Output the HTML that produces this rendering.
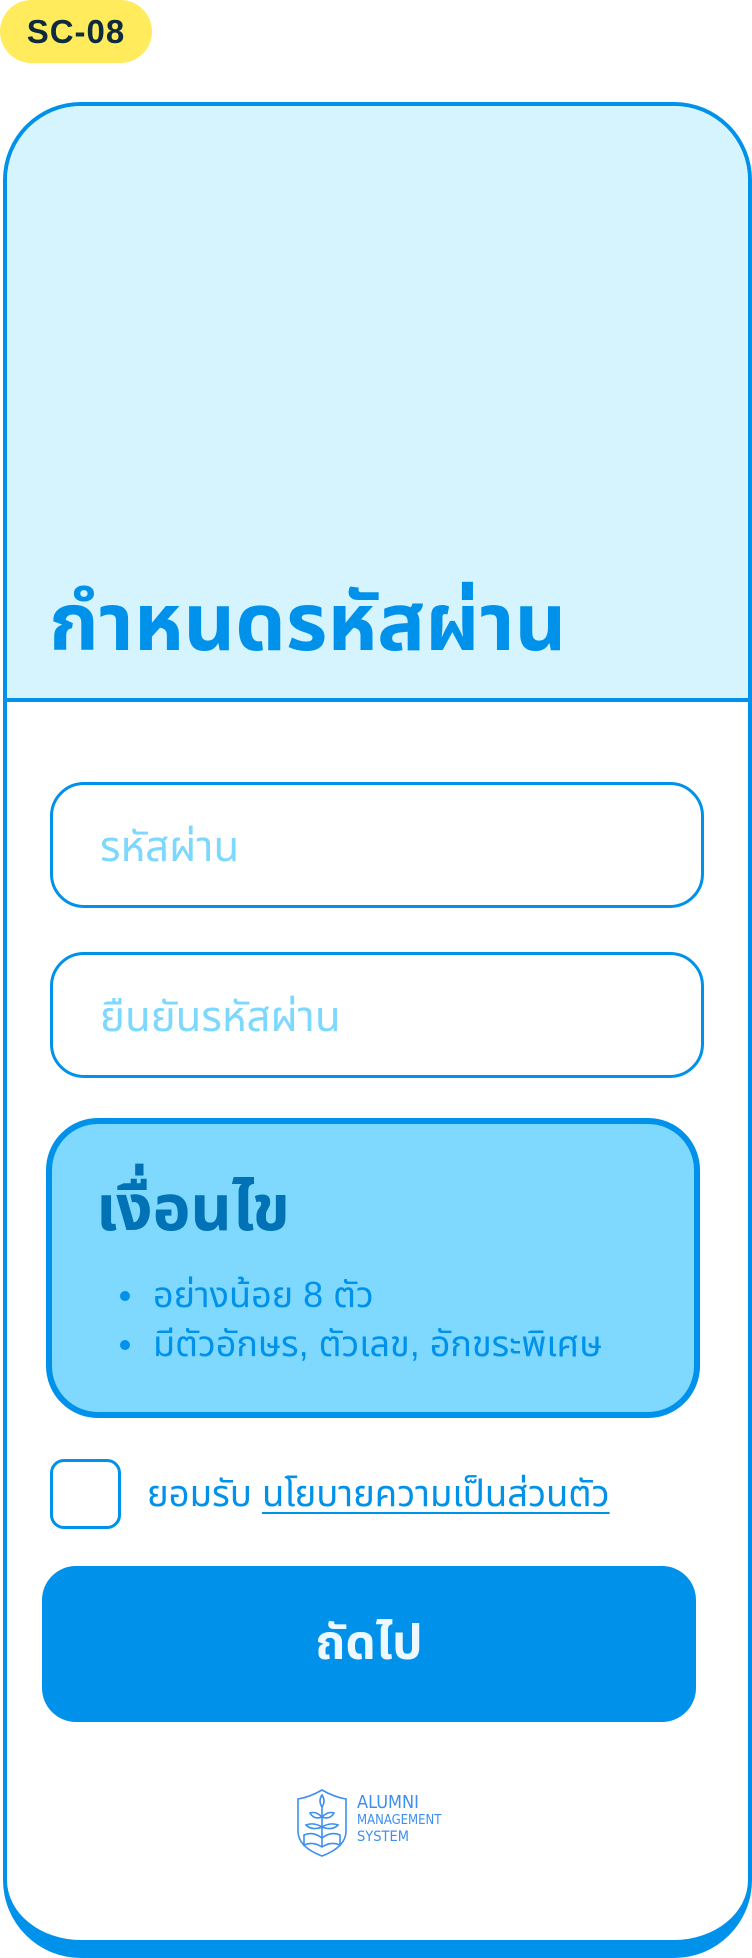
<!DOCTYPE html>
<html><head><meta charset="utf-8"><style>
*{margin:0;padding:0;box-sizing:border-box}
body{width:752px;height:1958px;background:#fff;position:relative;overflow:hidden;font-family:"Liberation Sans","Noto Sans Thai","Noto Sans CJK SC",sans-serif}
.abs{position:absolute}
.badge{left:0;top:0;width:152px;height:63px;background:#ffeb5b;border-radius:32px;color:#0d2a3f;font-weight:bold;font-size:33px;line-height:63px;text-align:center;letter-spacing:1px}
.card{left:3px;top:102px;width:749px;height:1856px;border:4px solid #0092ea;border-bottom-width:18px;border-radius:78px;overflow:hidden;background:#fff}
.head{left:0;top:0;width:100%;height:596px;background:#d6f4fd;border-bottom:4px solid #0092ea}
.title{left:42px;top:462px;font-size:80px;font-weight:bold;color:#0092ea;line-height:110px;white-space:nowrap}
.inp{left:50px;width:654px;height:126px;border:3.5px solid #0092ea;border-radius:34px;color:#7dd8fd;font-size:42px;line-height:124px;padding-left:47px;white-space:nowrap}
.cond{left:46px;top:1118px;width:654px;height:300px;border:6px solid #0092ea;border-radius:52px;background:#7fd8fe}
.cond h2{position:absolute;left:44px;top:44px;font-size:64px;color:#0072b5;font-weight:bold;line-height:80px;white-space:nowrap}
.cond ul{position:absolute;left:68px;top:146px;color:#0092ea;font-size:36px;line-height:49px;list-style:none}
.cond li{white-space:nowrap;position:relative;padding-left:33px}
.cond li:before{content:"";position:absolute;left:0;top:21px;width:10px;height:10px;border-radius:50%;background:#0092ea}
.chk{left:50px;top:1459px;width:71px;height:70px;border:3.5px solid #0092ea;border-radius:14px}
.acc{left:147px;top:1469px;font-size:36.5px;color:#0092ea;line-height:50px;white-space:nowrap}
.acc u{text-decoration-thickness:2px;text-underline-offset:6px}
.btn{left:42px;top:1566px;width:654px;height:156px;background:#0092ea;border-radius:34px;color:#eef8ff;font-size:48px;font-weight:bold;text-align:center;line-height:156px}
.logo{left:296px;top:1789px}
.lt{color:#3d8ff0;font-family:"DejaVu Sans Condensed","Liberation Sans",sans-serif;white-space:nowrap}
</style></head><body>
<div class="abs badge">SC-08</div>
<div class="abs card">
  <div class="abs head"></div>
  <div class="abs title">กำหนดรหัสผ่าน</div>
</div>
<div class="abs inp" style="top:782px">รหัสผ่าน</div>
<div class="abs inp" style="top:952px">ยืนยันรหัสผ่าน</div>
<div class="abs cond">
  <h2>เงื่อนไข</h2>
  <ul><li>อย่างน้อย 8 ตัว</li><li>มีตัวอักษร, ตัวเลข, อักขระพิเศษ</li></ul>
</div>
<div class="abs chk"></div>
<div class="abs acc">ยอมรับ <u>นโยบายความเป็นส่วนตัว</u></div>
<div class="abs btn">ถัดไป</div>
<div class="abs logo">
<svg width="52" height="68" viewBox="0 0 52 68" fill="none" stroke="#3d8ff0" stroke-width="1.6">
<path d="M2 10 Q14 8 26 1 Q38 8 50 10 V42 Q50 58 26 67 Q2 58 2 42 Z"/>
<path d="M26 58 V18"/>
<path d="M26 18 q-4 -6 0 -12 q4 6 0 12z"/>
<path d="M26 28 q-6 -6 -12 -4 q4 7 12 4z M26 28 q6 -6 12 -4 q-4 7 -12 4z"/>
<path d="M26 38 q-8 -5 -16 -2 q6 6 16 2z M26 38 q8 -5 16 -2 q-6 6 -16 2z"/>
<path d="M8 46 Q17 42 26 49 Q35 42 44 46 V56 Q35 52 26 58 Q17 52 8 56 Z"/>
</svg>
<div class="lt abs" style="left:61px;top:3px;font-size:18px">ALUMNI</div>
<div class="lt abs" style="left:61px;top:24px;font-size:13px">MANAGEMENT</div>
<div class="lt abs" style="left:61px;top:40px;font-size:14.5px">SYSTEM</div>
</div>
</body></html>
